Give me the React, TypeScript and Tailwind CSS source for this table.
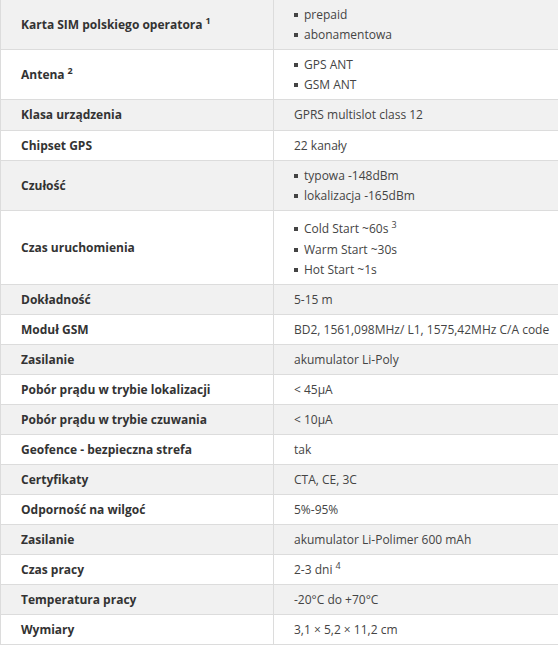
import React from 'react';

type Spec = {
  label: string;
  labelSup?: string;
  value?: string;
  valueSup?: string;
  items?: { text: string; sup?: string }[];
  pad?: string;
};

const SPECS: Spec[] = [
  { label: 'Karta SIM polskiego operatora', labelSup: '1', items: [{ text: 'prepaid' }, { text: 'abonamentowa' }] },
  { label: 'Antena', labelSup: '2', items: [{ text: 'GPS ANT' }, { text: 'GSM ANT' }] },
  { label: 'Klasa urządzenia', value: 'GPRS multislot class 12', pad: 'py-[5px]' },
  { label: 'Chipset GPS', value: '22 kanały' },
  { label: 'Czułość', items: [{ text: 'typowa -148dBm' }, { text: 'lokalizacja -165dBm' }] },
  {
    label: 'Czas uruchomienia',
    items: [{ text: 'Cold Start ~60s', sup: '3' }, { text: 'Warm Start ~30s' }, { text: 'Hot Start ~1s' }],
  },
  { label: 'Dokładność', value: '5-15 m' },
  { label: 'Moduł GSM', value: 'BD2, 1561,098MHz/ L1, 1575,42MHz C/A code' },
  { label: 'Zasilanie', value: 'akumulator Li-Poly' },
  { label: 'Pobór prądu w trybie lokalizacji', value: '< 45µA' },
  { label: 'Pobór prądu w trybie czuwania', value: '< 10µA' },
  { label: 'Geofence - bezpieczna strefa', value: 'tak' },
  { label: 'Certyfikaty', value: 'CTA, CE, 3C' },
  { label: 'Odporność na wilgoć', value: '5%-95%' },
  { label: 'Zasilanie', value: 'akumulator Li-Polimer 600 mAh' },
  { label: 'Czas pracy', value: '2-3 dni', valueSup: '4' },
  { label: 'Temperatura pracy', value: '-20°C do +70°C' },
  { label: 'Wymiary', value: '3,1 × 5,2 × 11,2 cm' },
];

const Sup: React.FC<{ n: string }> = ({ n }) => (
  <sup className="text-[9px] ml-[3px]">{n}</sup>
);

const App: React.FC = () => {
  return (
    <div
      className="w-[558px] bg-white text-[12px] leading-[20px] text-[#444]"
      style={{ fontFamily: '"Open Sans", "Liberation Sans", sans-serif' }}
    >
      <div className="border-l border-[#dcdcdc]">
        {SPECS.map((row, i) => (
          <div
            key={i}
            className={`grid grid-cols-[273px_1fr] border-b border-[#dcdcdc] ${i % 2 === 0 ? 'bg-[#f1f1f1]' : 'bg-white'}`}
          >
            <div className={`flex items-center border-r border-[#dcdcdc] pl-5 pr-2 font-bold text-[#333] ${row.pad ?? 'py-[4.5px]'}`}>
              <span>
                {row.label}
                {row.labelSup && <Sup n={row.labelSup} />}
              </span>
            </div>
            <div className={`pl-5 pr-1 ${row.pad ?? 'py-[4.5px]'}`}>
              {row.items ? (
                <ul>
                  {row.items.map((it) => (
                    <li key={it.text} className={`flex items-center ${it.sup ? 'h-[24px] pt-[2px]' : 'h-[20px]'}`}>
                      <span className="w-[4px] h-[4px] bg-[#444] mr-[6px] shrink-0" />
                      <span>
                        {it.text}
                        {it.sup && <Sup n={it.sup} />}
                      </span>
                    </li>
                  ))}
                </ul>
              ) : (
                <span>
                  {row.value}
                  {row.valueSup && <Sup n={row.valueSup} />}
                </span>
              )}
            </div>
          </div>
        ))}
      </div>
    </div>
  );
};

export default App;
